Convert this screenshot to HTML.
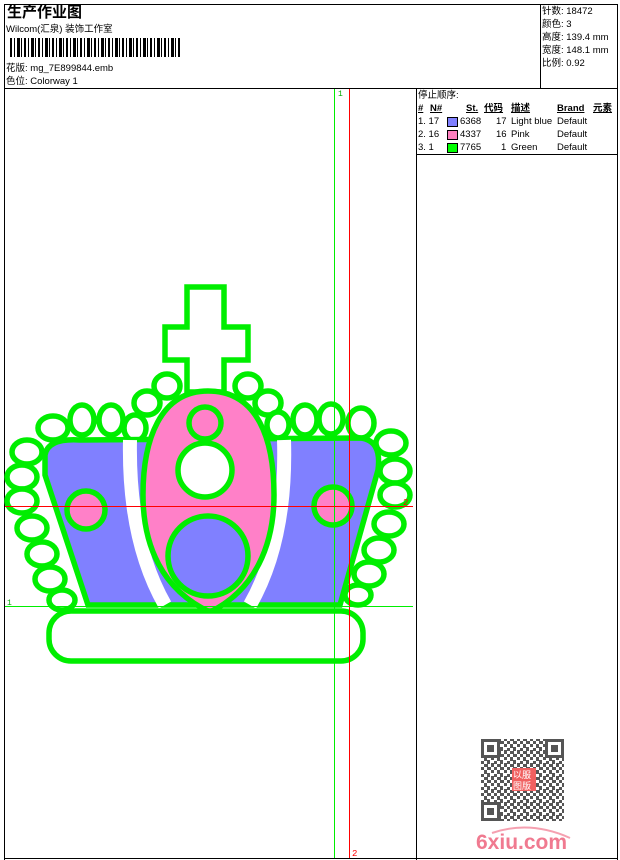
<!DOCTYPE html>
<html><head><meta charset="utf-8"><style>
html,body{margin:0;padding:0;background:#fff;}
body{width:620px;height:860px;position:relative;overflow:hidden;font-family:"Liberation Sans","Noto Sans CJK SC",sans-serif;color:#000;}
.t{position:absolute;font-size:9.5px;line-height:11px;white-space:nowrap;}
.ln{position:absolute;background:#000;}
</style></head><body>
<div class="ln" style="left:4px;top:4px;width:614px;height:1px"></div>
<div class="ln" style="left:4px;top:4px;width:1px;height:856px"></div>
<div class="ln" style="left:617px;top:4px;width:1px;height:856px"></div>
<div class="ln" style="left:4px;top:858px;width:614px;height:1px"></div>
<div class="ln" style="left:4px;top:88px;width:614px;height:1px"></div>
<div class="ln" style="left:540px;top:4px;width:1px;height:84px"></div>
<div class="ln" style="left:416px;top:88px;width:1px;height:772px"></div>
<div class="ln" style="left:416px;top:154px;width:202px;height:1px"></div>

<div class="t" style="left:7px;top:4px;font-size:15px;line-height:17px;font-weight:bold">生产作业图</div>
<div class="t" style="left:6px;top:24px">Wilcom(汇泉) 装饰工作室</div>
<div style="position:absolute;left:10px;top:38px;width:171px;height:19px;background:repeating-linear-gradient(90deg,#000 0 2px,#fff 2px 4px,#000 4px 5px,#fff 5px 7px,#000 7px 10px,#fff 10px 11px,#000 11px 12px,#fff 12px 14px)"></div>
<div class="t" style="left:6px;top:63px">花版: mg_7E899844.emb</div>
<div class="t" style="left:6px;top:76px">色位: Colorway 1</div>

<div class="t" style="left:542px;top:6px">针数: 18472</div>
<div class="t" style="left:542px;top:19px">颜色: 3</div>
<div class="t" style="left:542px;top:32px">高度: 139.4 mm</div>
<div class="t" style="left:542px;top:45px">宽度: 148.1 mm</div>
<div class="t" style="left:542px;top:58px">比例: 0.92</div>

<div class="t" style="left:418px;top:90px">停止顺序:</div>
<div class="t" style="left:418px;top:103px;font-weight:bold;text-decoration:underline">#</div>
<div class="t" style="left:430px;top:103px;font-weight:bold;text-decoration:underline">N#</div>
<div class="t" style="left:466px;top:103px;font-weight:bold;text-decoration:underline">St.</div>
<div class="t" style="left:484px;top:103px;font-weight:bold;text-decoration:underline">代码</div>
<div class="t" style="left:511px;top:103px;font-weight:bold;text-decoration:underline">描述</div>
<div class="t" style="left:557px;top:103px;font-weight:bold;text-decoration:underline">Brand</div>
<div class="t" style="left:593px;top:103px;font-weight:bold;text-decoration:underline">元素</div>

<div class="t" style="left:418px;top:116px">1. 17</div>
<div style="position:absolute;left:447px;top:117px;width:9px;height:8px;background:#8080ff;border:1px solid #000"></div>
<div class="t" style="left:460px;top:116px">6368</div>
<div class="t" style="left:496px;top:116px">17</div>
<div class="t" style="left:511px;top:116px">Light blue</div>
<div class="t" style="left:557px;top:116px">Default</div>

<div class="t" style="left:418px;top:129px">2. 16</div>
<div style="position:absolute;left:447px;top:130px;width:9px;height:8px;background:#ff80c0;border:1px solid #000"></div>
<div class="t" style="left:460px;top:129px">4337</div>
<div class="t" style="left:496px;top:129px">16</div>
<div class="t" style="left:511px;top:129px">Pink</div>
<div class="t" style="left:557px;top:129px">Default</div>

<div class="t" style="left:418px;top:142px">3. 1</div>
<div style="position:absolute;left:447px;top:143px;width:9px;height:8px;background:#00ff00;border:1px solid #000"></div>
<div class="t" style="left:460px;top:142px">7765</div>
<div class="t" style="left:501px;top:142px">1</div>
<div class="t" style="left:511px;top:142px">Green</div>
<div class="t" style="left:557px;top:142px">Default</div>

<svg style="position:absolute;left:0;top:0" width="620" height="860">
<g fill="#fff" stroke="#00ee00" stroke-width="5.5">
<path d="M187,287 H224 V327 H248 V360 H224 V392 H187 V360 H165 V327 H187 Z"/>
<ellipse cx="53" cy="428" rx="15" ry="12"/><ellipse cx="82" cy="420" rx="12" ry="15"/>
<ellipse cx="111" cy="420" rx="12" ry="15"/><ellipse cx="135" cy="428" rx="11" ry="13"/>
<ellipse cx="147" cy="403" rx="13" ry="12"/><ellipse cx="167" cy="386" rx="13" ry="12"/>
<ellipse cx="27" cy="452" rx="15" ry="12"/><ellipse cx="22" cy="477" rx="15" ry="12"/>
<ellipse cx="22" cy="501" rx="15" ry="12"/><ellipse cx="32" cy="528" rx="15" ry="12"/>
<ellipse cx="42" cy="554" rx="15" ry="12"/><ellipse cx="50" cy="579" rx="15" ry="12"/>
<ellipse cx="62" cy="600" rx="13" ry="10"/>
<ellipse cx="248" cy="386" rx="13" ry="12"/><ellipse cx="268" cy="403" rx="13" ry="12"/>
<ellipse cx="278" cy="425" rx="11" ry="13"/><ellipse cx="305" cy="420" rx="12" ry="15"/>
<ellipse cx="331" cy="419" rx="12" ry="15"/><ellipse cx="361" cy="423" rx="13" ry="15"/>
<ellipse cx="391" cy="443" rx="15" ry="12"/><ellipse cx="395" cy="471" rx="15" ry="12"/>
<ellipse cx="395" cy="495" rx="15" ry="12"/><ellipse cx="389" cy="524" rx="15" ry="12"/>
<ellipse cx="379" cy="550" rx="15" ry="12"/><ellipse cx="369" cy="574" rx="15" ry="12"/>
<ellipse cx="358" cy="595" rx="13" ry="10"/>
<path d="M45,455 Q48,438 80,440 L360,438 Q382,440 378,470 L340,605 L88,605 L45,475 Z" fill="#8080ff"/>
</g>
<path d="M130,440 Q128,540 165,605" fill="none" stroke="#fff" stroke-width="14"/>
<path d="M284,440 Q287,540 250,605" fill="none" stroke="#fff" stroke-width="14"/>
<g stroke="#00ee00" stroke-width="5.5">
<path d="M208,391 C258,391 274,440 274,495 C274,545 255,590 210,612 C162,590 143,545 143,495 C143,440 160,391 208,391 Z" fill="#ff80c8"/>
<circle cx="205" cy="423" r="16" fill="#ff80c8"/>
<circle cx="205" cy="470" r="27" fill="#fff"/>
<circle cx="208" cy="556" r="40" fill="#8080ff"/>
<circle cx="86" cy="510" r="19" fill="#ff80c8"/>
<circle cx="333" cy="506" r="19" fill="#ff80c8"/>
<rect x="49" y="611" width="314" height="50" rx="22" fill="#fff"/>
</g>
<line x1="334.5" y1="89" x2="334.5" y2="858" stroke="#00ee00" stroke-width="1"/>
<line x1="349.5" y1="89" x2="349.5" y2="858" stroke="#ff0000" stroke-width="1"/>
<line x1="5" y1="506.5" x2="413" y2="506.5" stroke="#ff0000" stroke-width="1"/>
<line x1="5" y1="606.5" x2="413" y2="606.5" stroke="#00ee00" stroke-width="1"/>
<text x="338" y="96" font-size="8" fill="#00aa00" font-family="Liberation Mono,monospace">1</text>
<text x="7" y="605" font-size="8" fill="#00aa00" font-family="Liberation Mono,monospace">1</text>
<text x="352" y="856" font-size="9" fill="#ff0000" font-family="Liberation Mono,monospace">2</text>
<text x="403" y="505" font-size="9" fill="#ff0000" font-family="Liberation Mono,monospace">2</text>
<defs><pattern id="qr" width="13" height="13" patternUnits="userSpaceOnUse">
<rect width="13" height="13" fill="#fff"/>
<rect x="0" y="0" width="3" height="3" fill="#555"/><rect x="6" y="0" width="4" height="3" fill="#555"/>
<rect x="3" y="3" width="3" height="4" fill="#555"/><rect x="10" y="3" width="3" height="3" fill="#555"/>
<rect x="0" y="7" width="3" height="3" fill="#555"/><rect x="6" y="6" width="3" height="4" fill="#555"/>
<rect x="3" y="10" width="4" height="3" fill="#555"/><rect x="10" y="9" width="3" height="4" fill="#555"/>
</pattern></defs>
<rect x="481" y="739" width="83" height="82" fill="url(#qr)"/>
<g fill="#fff" stroke="#555" stroke-width="3">
<rect x="482.5" y="740.5" width="16" height="16"/><rect x="546.5" y="740.5" width="16" height="16"/><rect x="482.5" y="803.5" width="16" height="16"/>
</g>
<g fill="#555"><rect x="487" y="745" width="7" height="7"/><rect x="551" y="745" width="7" height="7"/><rect x="487" y="808" width="7" height="7"/></g>
<rect x="512" y="768" width="24" height="23" fill="#f06060"/>
<text x="513" y="778" font-size="9" fill="#fff" font-family="Noto Sans CJK SC,sans-serif">以服</text>
<text x="513" y="789" font-size="9" fill="#fff" font-family="Noto Sans CJK SC,sans-serif">图版</text>
<path d="M492,833 Q530,820 570,838" fill="none" stroke="#f5a0b0" stroke-width="2"/>
<text x="476" y="849" font-size="21" font-weight="bold" fill="#f07a90" font-family="Liberation Sans,sans-serif">6xiu.com</text>
</svg>
</body></html>
